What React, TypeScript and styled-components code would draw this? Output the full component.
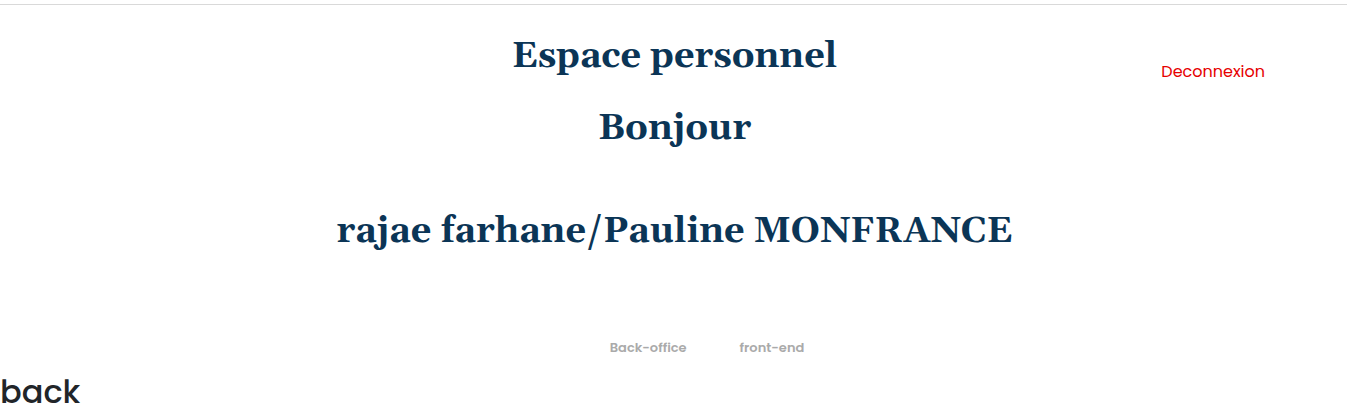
import React from "react";
import styled, { createGlobalStyle } from "styled-components";

const GlobalStyle = createGlobalStyle`
  *, *::before, *::after { box-sizing: border-box; }
  body {
    margin: 0;
    background: #fff;
    color: #212529;
    font-family: Poppins, Inter, "Open Sans", sans-serif;
    font-size: 16px;
    line-height: 24px;
  }
`;

const Page = styled.div`
  padding-top: 4px;
`;

const Header = styled.header`
  display: grid;
  grid-template-columns: 1fr 2fr 1fr;
  border-top: 1px solid #d9d9d9;
  padding-top: 30px;
`;

const Heading = styled.h1<{ $gap: number }>`
  margin: 0 0 ${(p) => p.$gap}px;
  padding-left: 2px;
  color: #0b3556;
  font-family: Gelasio, Georgia, "DejaVu Serif", "Liberation Serif", serif;
  font-size: 36px;
  font-weight: 700;
  line-height: 44px;
  text-align: center;
  white-space: nowrap;
`;

const Titles = styled.div`
  grid-column: 2;
`;

const Logout = styled.a`
  justify-self: end;
  align-self: start;
  margin: 25px 82px 0 0;
  color: #e60000;
  text-decoration: none;
`;

const Tabs = styled.nav`
  display: flex;
  justify-content: center;
  gap: 53px;
  padding: 84px 0 0 67px;
`;

const Tab = styled.button`
  padding: 0;
  border: 0;
  background: none;
  color: #aaa;
  font: 600 13px/20px Poppins, Inter, sans-serif;
`;

const PanelTitle = styled.h2`
  margin: 15px 0 0;
  font-size: 32px;
  font-weight: 500;
  line-height: 38px;
`;

export default function App() {
  return (
    <Page>
      <GlobalStyle />
      <Header>
        <Titles>
          <Heading $gap={28}>Espace personnel</Heading>
          <Heading $gap={59}>Bonjour</Heading>
        </Titles>
        <Logout href="#">Deconnexion</Logout>
      </Header>
      <main>
        <Heading as="h2" $gap={0}>rajae farhane/Pauline MONFRANCE</Heading>
        <Tabs>
          <Tab type="button">Back-office</Tab>
          <Tab type="button">front-end</Tab>
        </Tabs>
        <PanelTitle>back</PanelTitle>
      </main>
    </Page>
  );
}
